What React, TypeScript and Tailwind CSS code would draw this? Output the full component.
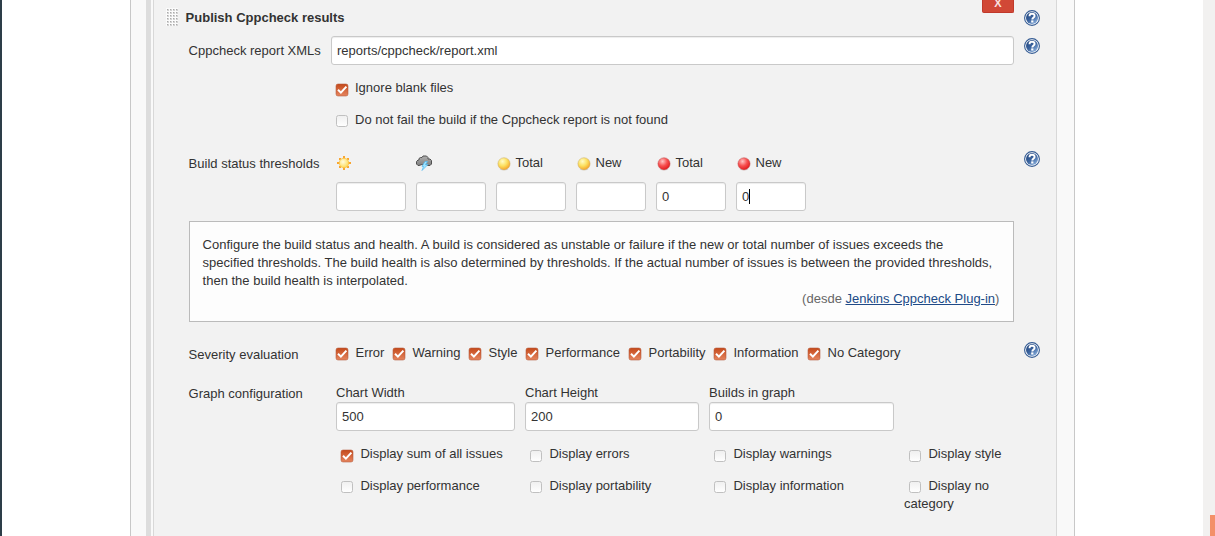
import type { ReactNode } from "react";

function Check({ on }: { on?: boolean }) {
  return on ? (
    <svg width="14" height="14" viewBox="0 0 14 14" className="shrink-0">
      <defs>
        <linearGradient id="ck" x1="0" y1="0" x2="0" y2="1">
          <stop offset="0" stopColor="#c4491a" />
          <stop offset="1" stopColor="#e5855f" />
        </linearGradient>
      </defs>
      <rect x="1" y="1" width="12" height="12" rx="2" fill="url(#ck)" stroke="#b5593a" strokeOpacity=".55" />
      <path d="M3 6.8 5.9 9.6 11.4 3.6" fill="none" stroke="#fff" strokeWidth="2" />
    </svg>
  ) : (
    <svg width="14" height="14" viewBox="0 0 14 14" className="shrink-0">
      <defs>
        <linearGradient id="un" x1="0" y1="0" x2="0" y2="1">
          <stop offset="0" stopColor="#efefef" />
          <stop offset="1" stopColor="#ffffff" />
        </linearGradient>
      </defs>
      <rect x="1.5" y="1.5" width="11" height="11" rx="2" fill="url(#un)" stroke="#c0c0c0" />
    </svg>
  );
}

function Option({
  on,
  children,
  width = "",
  gap = "gap-[6px]",
  drop = "mt-[3px]",
}: {
  on?: boolean;
  children: ReactNode;
  width?: string;
  gap?: string;
  drop?: string;
}) {
  return (
    <label className={`flex h-[18px] shrink-0 items-start whitespace-nowrap ${gap} ${width}`}>
      <span className={drop}>
        <Check on={on} />
      </span>
      <span>{children}</span>
    </label>
  );
}

function Help() {
  return (
    <svg width="16" height="16" viewBox="0 0 16 16" className="shrink-0">
      <defs>
        <linearGradient id="hp" x1="0" y1="0" x2=".8" y2="1">
          <stop offset="0" stopColor="#1f4279" />
          <stop offset=".55" stopColor="#3a639e" />
          <stop offset="1" stopColor="#8fb4e0" />
        </linearGradient>
      </defs>
      <circle cx="8" cy="8" r="7.4" fill="#fff" stroke="#345b93" strokeWidth="1.1" />
      <circle cx="8" cy="8" r="6" fill="url(#hp)" />
      <path d="M5.5 6.2c0-1.7 1-2.4 2.5-2.4s2.6.7 2.6 2.1c0 1.6-2.3 1.6-2.3 3.6" fill="none" stroke="#fff" strokeWidth="1.9" />
      <rect x="7.2" y="10.4" width="2.2" height="2.1" fill="#fff" />
    </svg>
  );
}

function Ball({ red }: { red?: boolean }) {
  const id = red ? "ballRed" : "ballYellow";
  return (
    <svg width="14" height="14" viewBox="0 0 14 14" className="mt-[3px] shrink-0">
      <defs>
        <radialGradient id={id} cx=".38" cy=".3" r=".75">
          <stop offset="0" stopColor={red ? "#ffc4c4" : "#fffcc8"} />
          <stop offset=".5" stopColor={red ? "#f75050" : "#fce060"} />
          <stop offset="1" stopColor={red ? "#de1417" : "#f49c22"} />
        </radialGradient>
      </defs>
      <ellipse cx="7" cy="12.4" rx="4.2" ry=".8" fill="#888" opacity=".25" />
      <circle cx="7" cy="6.8" r="6.1" fill={`url(#${id})`} stroke={red ? "#bd5a5a" : "#c9ad6a"} strokeWidth=".5" />
    </svg>
  );
}

function Sun() {
  return (
    <svg width="16" height="16" viewBox="0 0 16 16">
      <defs>
        <radialGradient id="sun" cx=".4" cy=".38" r=".65">
          <stop offset="0" stopColor="#fffce0" />
          <stop offset="1" stopColor="#fdd850" />
        </radialGradient>
      </defs>
      <path
        d="M7 1h2v3H7zM7 12h2v3H7zM1 7h3v2H1zM12 7h3v2h-3zM3 3h2v2H3zM11 3h2v2h-2zM3 11h2v2H3zM11 11h2v2h-2z"
        fill="#f9a530"
      />
      <circle cx="8" cy="8" r="4.8" fill="url(#sun)" stroke="#fbc040" strokeWidth=".7" />
    </svg>
  );
}

function Storm() {
  return (
    <svg width="16" height="16" viewBox="0 0 16 16">
      <defs>
        <linearGradient id="cl" x1="0" y1="0" x2="0" y2="1">
          <stop offset="0" stopColor="#b0b0b0" />
          <stop offset="1" stopColor="#808080" />
        </linearGradient>
      </defs>
      <path
        d="M3 10.5H2L.5 9V6.5L2 5h1V3.5L4.5 2.5H6L7 1h3.500L12 2.500V4h2l1.500 1.500V9L14 10.500h-2.500L10 9.500 8 10.500l-2-1z"
        fill="url(#cl)"
        stroke="#505050"
      />
      <path d="M9 6.500h2.500L9.500 9.500H12L6 15.500l1.500-4H6z" fill="#a0e4ff" stroke="#4cb8f2" strokeWidth=".7" />
    </svg>
  );
}

function Field({ value = "", width, caret }: { value?: string; width: string; caret?: boolean }) {
  return (
    <div className={`flex h-[29px] shrink-0 items-center rounded-[3px] border border-[#c9c9c9] bg-white px-[5px] shadow-[inset_0_1px_1px_rgba(0,0,0,0.075)] ${width}`}>
      <span>{value}</span>
      {caret && <span className="h-[15px] w-px bg-black" />}
    </div>
  );
}

function Grip() {
  return (
    <svg width="12" height="18" viewBox="0 0 12 18" className="mt-2 shrink-0">
      <defs>
        <pattern id="dots" width="3" height="3" patternUnits="userSpaceOnUse">
          <path d="M1 1h2v2H1z" fill="#d2d2d2" />
          <path d="M1 1h1v1H1z" fill="#aaa" />
        </pattern>
      </defs>
      <rect width="12" height="18" fill="#fbfbfb" />
      <rect width="12" height="18" fill="url(#dots)" />
    </svg>
  );
}

const thresholds = [
  { icon: <Sun /> },
  { icon: <Storm /> },
  { icon: <Ball />, label: "Total" },
  { icon: <Ball />, label: "New" },
  { icon: <Ball red />, label: "Total", value: "0" },
  { icon: <Ball red />, label: "New", value: "0", caret: true },
];

const severities = [
  ["Error", "w-[57px]"],
  ["Warning", "w-[76px]"],
  ["Style", "w-[57px]"],
  ["Performance", "w-[103px]"],
  ["Portability", "w-[85px]"],
  ["Information", "w-[94px]"],
  ["No Category", "w-[100px]"],
];

export default function App() {
  return (
    <div className="flex h-[536px] w-[1215px] overflow-hidden bg-white font-['Liberation_Sans',Arial,sans-serif] text-[13px] leading-[18px] text-[#333]">
      <div className="w-[2px] bg-[#2d3e48]" />
      <div className="w-[128px]" />
      <div className="w-[945px] border-x border-[#c8c8c8] bg-[#f9f9f9] pl-[15px] pr-[17px]">
        <div className="flex h-full">
          <div className="w-[5px] shrink-0 bg-[#dddddd]" />
          <div className="w-[2px] shrink-0" />
          <main className="w-[904px] shrink-0 border-x border-[#d8d8d8] bg-[#f2f2f2]">
            <header className="flex h-9 items-start pl-3">
              <Grip />
              <h2 className="ml-[7.6px] mt-[9px] w-[796.4px] font-bold">Publish Cppcheck results</h2>
              <button className="flex h-[13px] w-8 justify-center rounded-b-[2px] border border-t-0 border-[#c0392b] bg-[#d14836] text-[11px] font-bold leading-[7px] text-[#fbe3e0]">X</button>
              <div className="ml-[10px] mt-[10px]"><Help /></div>
            </header>

            <section className="flex h-[43px] items-start pl-[35px]">
              <label className="-ml-[0.4px] mt-[6px] w-[142.4px]">Cppcheck report XMLs</label>
              <Field value="reports/cppcheck/report.xml" width="w-[683px]" />
              <div className="ml-[10px] mt-[2px]"><Help /></div>
            </section>

            <section className="flex flex-col gap-[14px] pl-[181px]">
              <Option on drop="mt-[4px]">Ignore blank files</Option>
              <Option>Do not fail the build if the Cppcheck report is not found</Option>
            </section>

            <section className="mt-[22px] flex h-[70px] items-start pl-[35px]">
              <div className="-ml-[0.4px] mt-1 w-[147.4px]">Build status thresholds</div>
              <div className="flex w-[688px] gap-[10px]">
                {thresholds.map((t, i) => (
                  <div key={i} className="flex w-[70px] flex-col">
                    <div className="flex h-[31px] items-start gap-[5px] pt-[3px]">
                      {t.label ? <span className="ml-[1px]">{t.icon}</span> : <span className="mt-[1px]">{t.icon}</span>}
                      {t.label && <span className="-ml-[0.5px]">{t.label}</span>}
                    </div>
                    <Field value={t.value} caret={t.caret} width="w-[70px]" />
                  </div>
                ))}
              </div>
              <Help />
            </section>

            <section className="ml-[35px] h-[101px] w-[825px] border border-[#bbb] bg-[#fdfdfd] pl-[12.6px] pr-[13.6px] pt-[14px]">
              <p className="whitespace-nowrap">
                Configure the build status and health. A build is considered as unstable or failure if the new or total number of issues exceeds the
                <br />
                specified thresholds. The build health is also determined by thresholds. If the actual number of issues is between the provided thresholds,
                <br />
                then the build health is interpolated.
              </p>
              <p className="text-right text-[#666]">
                (desde <a className="text-[#204a87] underline">Jenkins Cppcheck Plug-in</a>)
              </p>
            </section>

            <section className="mt-5 flex h-[41px] items-start pl-[35px]">
              <div className="-ml-[0.4px] mt-1 w-[146.4px]">Severity evaluation</div>
              <div className="mt-[2px] flex w-[689px]">
                {severities.map(([name, width]) => (
                  <Option key={name} on width={width} gap="gap-[6.5px]">{name}</Option>
                ))}
              </div>
              <Help />
            </section>

            <section className="flex items-start pl-[35px]">
              <div className="-ml-[0.4px] mt-[2px] w-[147.4px] shrink-0">Graph configuration</div>
              <div className="w-[690px]">
                <div className="flex gap-[10px]">
                  <div className="pt-[1px]">Chart Width<Field value="500" width="w-[179px]" /></div>
                  <div className="pt-[1px]">Chart Height<Field value="200" width="w-[174px]" /></div>
                  <div className="pt-[1px]">Builds in graph<Field value="0" width="w-[185px]" /></div>
                </div>
                <div className="mt-[14px] grid grid-cols-[189px_184px_195px_120px] gap-y-[14px] pl-1">
                  <Option on gap="gap-[6.4px]" drop="mt-[4px]">Display sum of all issues</Option>
                  <Option gap="gap-[6.4px]" drop="mt-[4px]">Display errors</Option>
                  <Option gap="gap-[6.4px]" drop="mt-[4px]">Display warnings</Option>
                  <Option gap="gap-[6.4px]" drop="mt-[4px]">Display style</Option>
                  <Option gap="gap-[6.4px]">Display performance</Option>
                  <Option gap="gap-[6.4px]">Display portability</Option>
                  <Option gap="gap-[6.4px]">Display information</Option>
                  <div>
                    <Option gap="gap-[6.4px]">Display no</Option>
                    <div className="-ml-1">category</div>
                  </div>
                </div>
              </div>
            </section>
          </main>
        </div>
      </div>
      <div className="w-[128px]" />
      <aside className="flex w-3 items-end justify-end bg-[#f2f1f0]">
        <div className="h-[21px] w-[5px] bg-[#f39069]" />
      </aside>
    </div>
  );
}
